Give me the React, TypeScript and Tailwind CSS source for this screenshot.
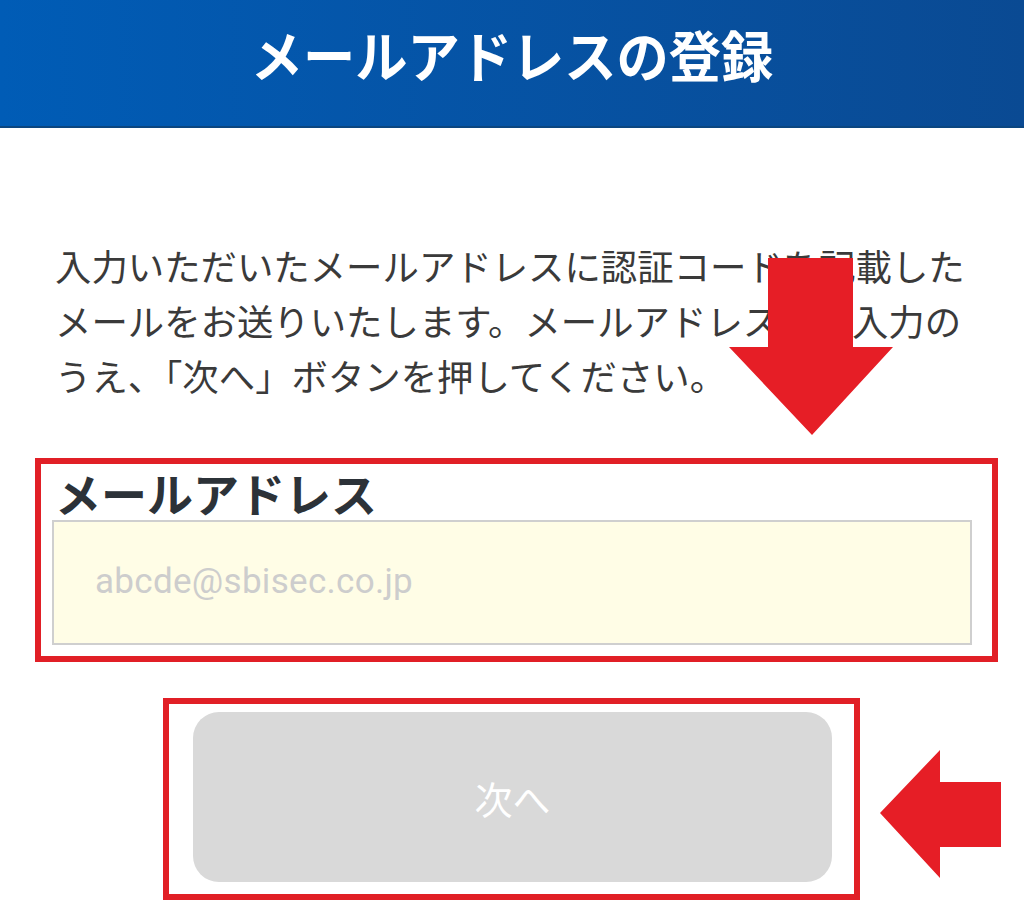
const jp = { fontFamily: '"Noto Sans CJK JP", "Noto Sans", sans-serif' };

const DownArrow = () => (
  <svg
    className="absolute left-[729px] top-[258px]"
    width="164"
    height="177"
    viewBox="0 0 164 177"
  >
    <polygon points="39,0 124,0 124,89 164,89 83,177 0,89 39,89" fill="#e61e26" />
  </svg>
);

const LeftArrow = () => (
  <svg
    className="absolute left-[880px] top-[750px]"
    width="121"
    height="128"
    viewBox="0 0 121 128"
  >
    <polygon points="0,63 60,0 60,32 121,32 121,97 60,97 60,128" fill="#e61e26" />
  </svg>
);

export default function App() {
  return (
    <div className="relative w-[1024px] h-[907px] overflow-hidden bg-white" style={jp}>
      {/* Header */}
      <header className="h-[128px] flex items-center justify-center bg-gradient-to-r from-[#005cb6] to-[#0a4a93] border-b-2 border-[#0b4680]">
        <h1 className="text-[55px] font-bold text-white leading-none pb-[20px] scale-x-[0.95]">
          メールアドレスの登録
        </h1>
      </header>

      {/* Description */}
      <p className="mt-[110px] pl-[55px] pr-[40px] text-[36.4px] leading-[55px] text-[#3a3a3a]">
        入力いただいたメールアドレスに認証コードを記載した
        <br />
        メールをお送りいたします。メールアドレスをご入力の
        <br />
        うえ、「次へ」ボタンを押してください。
      </p>

      {/* Email field */}
      <div className="mt-[55px] ml-[35px] w-[963px] border-[6px] border-[#e11f26] pl-[11px] pr-[20px] pb-[11px]">
        <div className="pl-[3px] h-[56px] text-[46px] leading-[56px] font-bold text-[#2c3238]">
          メールアドレス
        </div>
        <div className="h-[125px] bg-[#fffde6] border-2 border-[#cfcfcf] flex items-center pl-[41px]">
          <span
            className="text-[35px] text-[#cdcdcd] tracking-[0.3px]"
            style={{ fontFamily: 'Roboto, "Liberation Sans", sans-serif' }}
          >
            abcde@sbisec.co.jp
          </span>
        </div>
      </div>

      {/* Next button */}
      <div className="mt-[36px] ml-[163px] w-[697px] h-[202px] border-[6px] border-[#e11f26] pl-[24px] pt-[8px]">
        <button
          className="w-[639px] h-[170px] rounded-[26px] bg-[#d9d9d9] text-white text-[38px] flex items-center justify-center"
          style={jp}
        >
          次へ
        </button>
      </div>

      <DownArrow />
      <LeftArrow />
    </div>
  );
}
